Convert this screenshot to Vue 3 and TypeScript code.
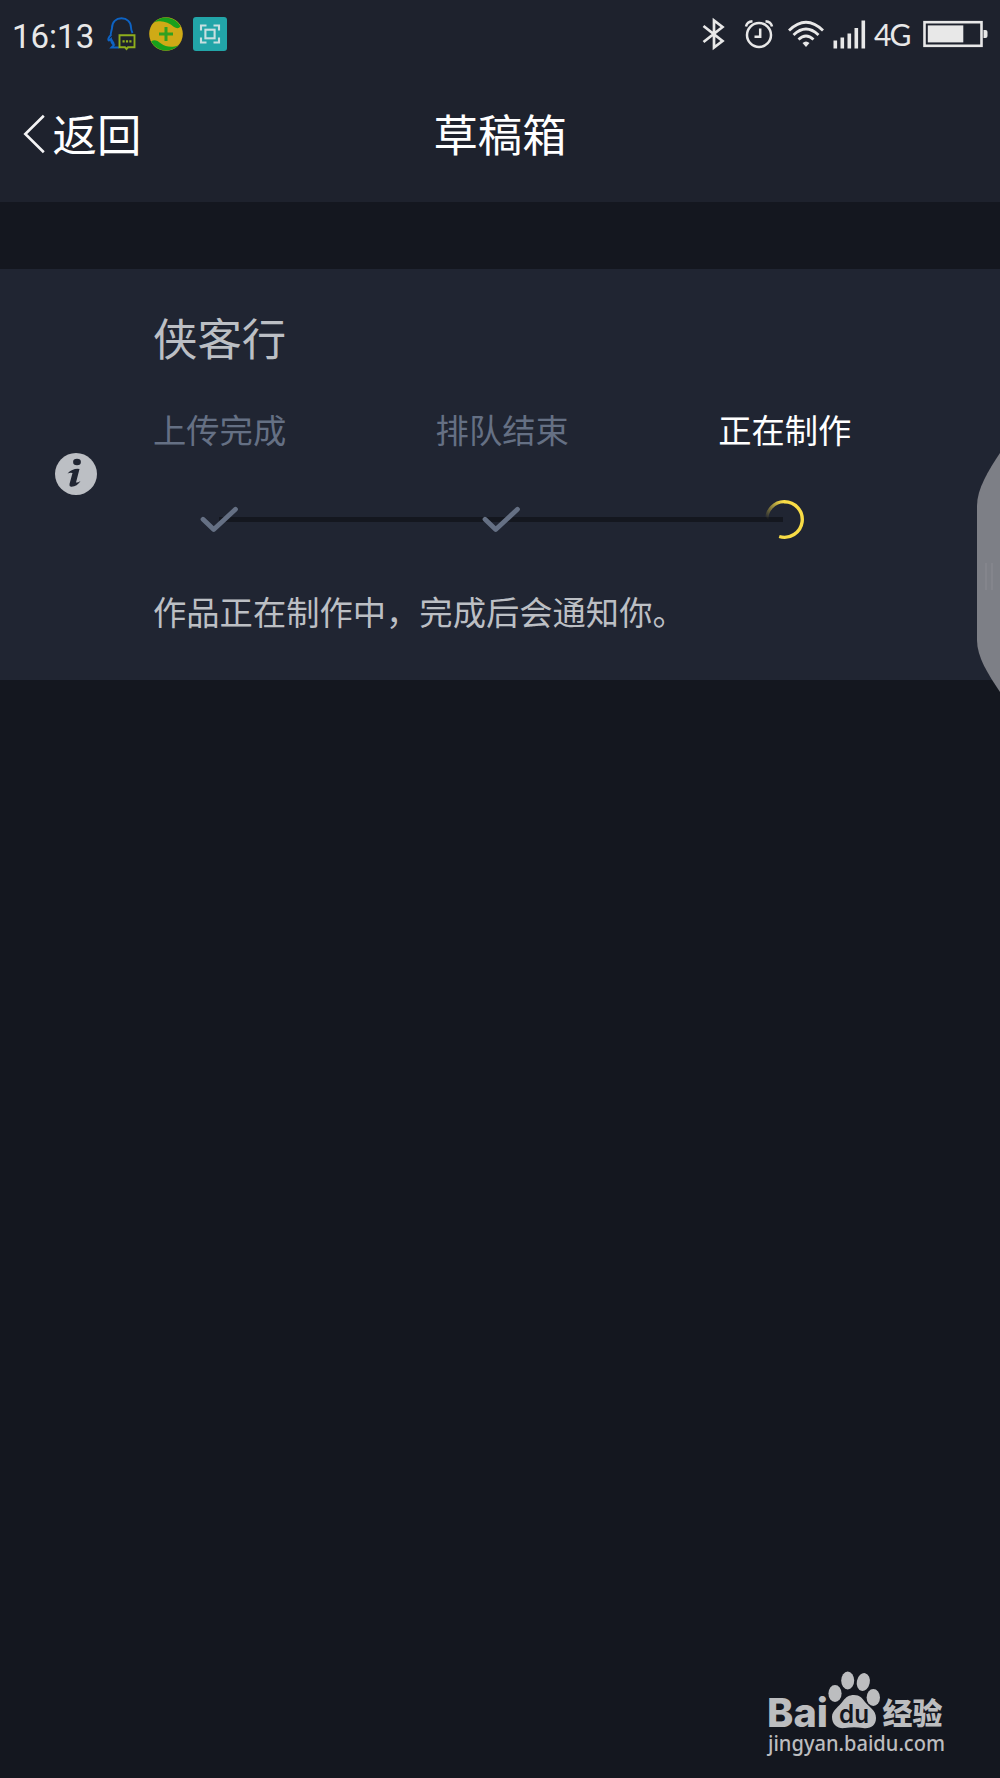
<script setup lang="ts">
interface Step {
  label: string
  state: 'done' | 'active'
}

const steps: Step[] = [
  { label: '上传完成', state: 'done' },
  { label: '排队结束', state: 'done' },
  { label: '正在制作', state: 'active' },
]
</script>

<template>
  <div class="screen">
    <div class="status">
      <span class="clock">16:13</span>
      <svg class="qq" width="30" height="34" viewBox="0 0 30 34" fill="none">
        <path d="M4 19C3 16 5 13 5 11C5 5 9 1.300 14.500 1.300S24 5 24 10.500Q24 13 25.500 16M4 18C1.500 20 .500 23 2 23.500L4 22Q4 26 7 28L4.500 30.500H12M4 22L7 27" stroke="#0d63c4" stroke-width="1.900" />
        <path d="M12.500 18.300H27.500V30.300H21L19.500 32L18 30.300H12.500Z" stroke="#8fae1c" stroke-width="1.900" />
        <path d="M15.500 24.300h2.200M18.900 24.300h2.200M22.300 24.300h2.200" stroke="#8fae1c" stroke-width="2.200" />
      </svg>
      <svg class="guard" width="36" height="36" viewBox="0 0 36 36">
        <circle cx="18" cy="18" r="16.800" fill="#cfaa16" />
        <path d="M5.500 6.800A16.800 16.800 0 0 1 32.600 10.500Q30 13.500 26 11C20 6 12.500 3.500 5.500 6.800Z" fill="#18a01c" />
        <path d="M3.200 25.500A16.800 16.800 0 0 0 30.500 29.200C24 32 18 31 13 27.500Q7 22 3.200 25.500Z" fill="#18a01c" />
        <path d="M18 11V25M11 18H25" stroke="#30a020" stroke-width="3" />
      </svg>
      <svg class="shot" width="34" height="34" viewBox="0 0 34 34" fill="none">
        <rect width="34" height="34" rx="3" fill="#22a5a8" />
        <path d="M8 13.500V8.500H13.500M20.500 8.500H26V13.500M26 20.500V25.500H20.500M13.500 25.500H8V20.500" stroke="#c8dfe0" stroke-width="2.100" />
        <rect x="12.400" y="12.700" width="9.200" height="8.600" stroke="#c8dfe0" stroke-width="2.100" />
      </svg>
      <span class="fill"></span>
      <svg class="bluetooth" width="24" height="34" viewBox="0 0 24 34" fill="none" stroke="#e8e8e8" stroke-width="2.700">
        <path d="M1.500 9L20.500 24L12 30.500V3.500L20.500 10L1.500 25" />
      </svg>
      <svg class="alarm" width="30" height="30" viewBox="0 0 30 30" fill="none" stroke="#e8e8e8" stroke-width="2.500">
        <circle cx="15" cy="16" r="12" />
        <path d="M16.200 9.500V17.700H10.500M2 7.500Q3 2.700 8.500 2.200M21.500 2.200Q27 2.700 28 7.500" />
      </svg>
      <svg class="wifi" width="38" height="30" viewBox="0 0 38 30" fill="none" stroke="#e8e8e8" stroke-width="2.800">
        <path d="M2 11.500Q19-5 36 11.500M6.500 16Q19 4 31.500 16M11.500 20.500Q19 13.500 26.500 20.500" />
        <path d="M15.500 24Q19 21 22.500 24L19 28Z" fill="#e8e8e8" stroke="none" />
      </svg>
      <svg class="signal" width="33" height="29" viewBox="0 0 33 29" fill="#e8e8e8">
        <path d="M.500 20.500h3.600v8h-3.600zM7.500 17.500h3.600v11h-3.600zM14.500 13.500h3.600v15h-3.600zM21.500 8h3.600v20.500h-3.600zM28.500 .500h3.600v28h-3.600z" />
      </svg>
      <span class="network">4G</span>
      <svg class="battery" width="66" height="28" viewBox="0 0 66 28">
        <rect x="1.500" y="2.200" width="57" height="23.600" fill="none" stroke="#e8e8e8" stroke-width="2.600" />
        <rect x="4.800" y="5.400" width="35.500" height="17" fill="#e8e8e8" />
        <path d="M60.500 10H62.500Q64.500 10 64.500 12V16Q64.500 18 62.500 18H60.500Z" fill="#e8e8e8" />
      </svg>
    </div>

    <header class="bar">
      <div class="back">
        <svg width="22" height="40" viewBox="0 0 22 40" fill="none" stroke="#f4f4f5" stroke-width="2.600">
          <path d="M20.800 1.800L2.300 20L20.800 38.200" />
        </svg>
        <span>返回</span>
      </div>
      <h1>草稿箱</h1>
    </header>

    <section class="card">
      <div class="info">
        <svg width="42" height="42" viewBox="0 0 42 42">
          <circle cx="21" cy="21" r="21" fill="#bcbfc4" />
          <ellipse cx="22" cy="9" rx="3.900" ry="3.200" fill="#202532" />
          <path d="M12.500 20.500Q18 15 24.500 16L21 29.500Q22.500 30 25.500 28Q22 34 16 33.700Q14 33.500 14.500 31L17.500 20Q15 19.500 12.500 20.500Z" fill="#202532" />
        </svg>
      </div>
      <div class="detail">
        <h2>侠客行</h2>
        <div class="steps">
          <div v-for="step in steps" :key="step.label" class="step" :class="step.state">
            <span class="label">{{ step.label }}</span>
            <div class="mark">
              <svg v-if="step.state === 'done'" width="44" height="44" viewBox="0 0 44 44" fill="none">
                <path d="M5 22.300L15.700 32.600L37.500 12.300" stroke="#657084" stroke-width="4.800" stroke-linecap="round" stroke-linejoin="round" />
              </svg>
              <svg v-else width="44" height="44" viewBox="0 0 44 44" fill="none">
                <defs>
                  <linearGradient id="tail" gradientUnits="userSpaceOnUse" x1="4" y1="22" x2="20" y2="5">
                    <stop offset="0" stop-color="#f8dc46" stop-opacity="0" />
                    <stop offset="1" stop-color="#f8dc46" />
                  </linearGradient>
                </defs>
                <path d="M3.700 23A17.800 17.800 0 0 1 21.200 4.700" stroke="url(#tail)" stroke-width="3.200" />
                <path d="M21 4.700A17.800 17.800 0 1 1 16.200 39.500" stroke="#f8dc46" stroke-width="3.400" />
              </svg>
            </div>
          </div>
        </div>
        <p>作品正在制作中，完成后会通知你。</p>
      </div>
    </section>

    <svg class="handle" width="24" height="242" viewBox="0 0 24 242">
      <path d="M24 0C12 18 1 36 1 53V187C1 204 12 221 24 239Z" fill="#85878d" fill-opacity=".92" />
      <path d="M10 110V137M16 110V137" stroke="#86888e" stroke-width="1.500" />
    </svg>

    <div class="watermark">
      <svg width="190" height="104" viewBox="0 0 190 104">
        <g fill="#bcbdbf">
          <text class="brand" x="4" y="61.700" font-size="40" textLength="61" lengthAdjust="spacingAndGlyphs">Bai</text>
          <ellipse cx="72" cy="28.500" rx="6.600" ry="8.500" />
          <ellipse cx="84.700" cy="15.500" rx="6.500" ry="9" />
          <ellipse cx="100.300" cy="17" rx="6.500" ry="9" transform="rotate(12 100.300 17)" />
          <ellipse cx="110.300" cy="32.500" rx="6.700" ry="8.500" />
          <path d="M91 30C97 30 99 33 102 37C106 42 113 45 113 53C113 61 107 64 100 63Q91 61.500 82 63C75 64 69 60 69 52C69 45 76 42 80 36C83 32 86 30 91 30Z" />
          <text class="cjk" x="119.500" y="58.500" font-size="29.500" textLength="60" lengthAdjust="spacingAndGlyphs">经验</text>
          <text class="url" x="5" y="85.700" font-size="22" textLength="177" lengthAdjust="spacingAndGlyphs">jingyan.baidu.com</text>
        </g>
        <text class="paw" x="76" y="57.700" font-size="25.500" fill="#14171f" textLength="30" lengthAdjust="spacingAndGlyphs">du</text>
      </svg>
    </div>
  </div>
</template>

<style>
body {
  background: #14171f;
}
</style>

<style scoped>
.screen {
  position: relative;
  box-sizing: border-box;
  height: 1778px;
  overflow: hidden;
  background: #14171f;
  font-family: "Noto Sans CJK SC", sans-serif;
}
h1, h2, p {
  margin: 0;
  font-weight: 400;
}
svg {
  display: block;
  flex: none;
}
.status {
  display: flex;
  align-items: center;
  height: 68px;
  padding: 0 12px;
  background: #1e222d;
}
.clock {
  width: 95px;
  padding-top: 6px;
  font: 33px/40px Roboto, sans-serif;
  color: #e8e8e8;
}
.guard { margin-left: 11px; }
.shot { margin-left: 9px; }
.fill { flex: 1; }
.alarm { margin-left: 18px; }
.wifi { margin-left: 13px; }
.signal { margin-left: 8px; }
.network {
  width: 36px;
  margin-left: 8px;
  font: 400 30px/40px Lato, sans-serif;
  letter-spacing: -2px;
  color: #e8e8e8;
}
.battery {
  margin-left: 13px;
  margin-right: -1px;
}
.bar {
  display: grid;
  grid-template-columns: 1fr auto 1fr;
  align-items: start;
  height: 134px;
  background: #1e222d;
  color: #fff;
  font-size: 44.400px;
  line-height: 129px;
}
.back {
  display: flex;
  align-items: center;
  gap: 8px;
  padding-left: 22.500px;
}
.back svg {
  margin-top: 3px;
}
.bar h1 {
  font-size: 44.400px;
}
.card {
  display: flex;
  height: 411.500px;
  margin-top: 66.500px;
  background: #202532;
}
.info {
  display: flex;
  align-items: center;
  width: 98px;
  padding-left: 55px;
}
.detail {
  padding-top: 38.500px;
}
.detail h2 {
  font-size: 44.400px;
  line-height: 60px;
  color: #bcbfc4;
}
.steps {
  position: relative;
  display: flex;
  gap: 149.300px;
  margin-top: 37px;
}
.steps::before {
  content: "";
  position: absolute;
  left: 66px;
  right: 68px;
  top: 113px;
  height: 5px;
  background: #14171f;
}
.step {
  position: relative;
  width: 133.300px;
  white-space: nowrap;
}
.label {
  display: block;
  font-size: 33.300px;
  line-height: 50px;
  color: #657084;
}
.active .label {
  color: #fff;
}
.mark {
  display: flex;
  justify-content: center;
  margin-top: 43px;
}
.detail p {
  margin-top: 44.500px;
  font-size: 33.300px;
  line-height: 50px;
  color: #bcbfc4;
}
.handle {
  position: absolute;
  top: 453px;
  right: 0;
}
.watermark {
  position: absolute;
  left: 763px;
  top: 1665px;
}
.brand {
  font-family: Inter, sans-serif;
  font-weight: 800;
}
.paw {
  font-family: Inter, sans-serif;
  font-weight: 600;
}
.cjk {
  font-family: "Noto Sans CJK SC", sans-serif;
  font-weight: 900;
}
.url {
  font-family: "Noto Sans", sans-serif;
  font-weight: 500;
}
</style>
